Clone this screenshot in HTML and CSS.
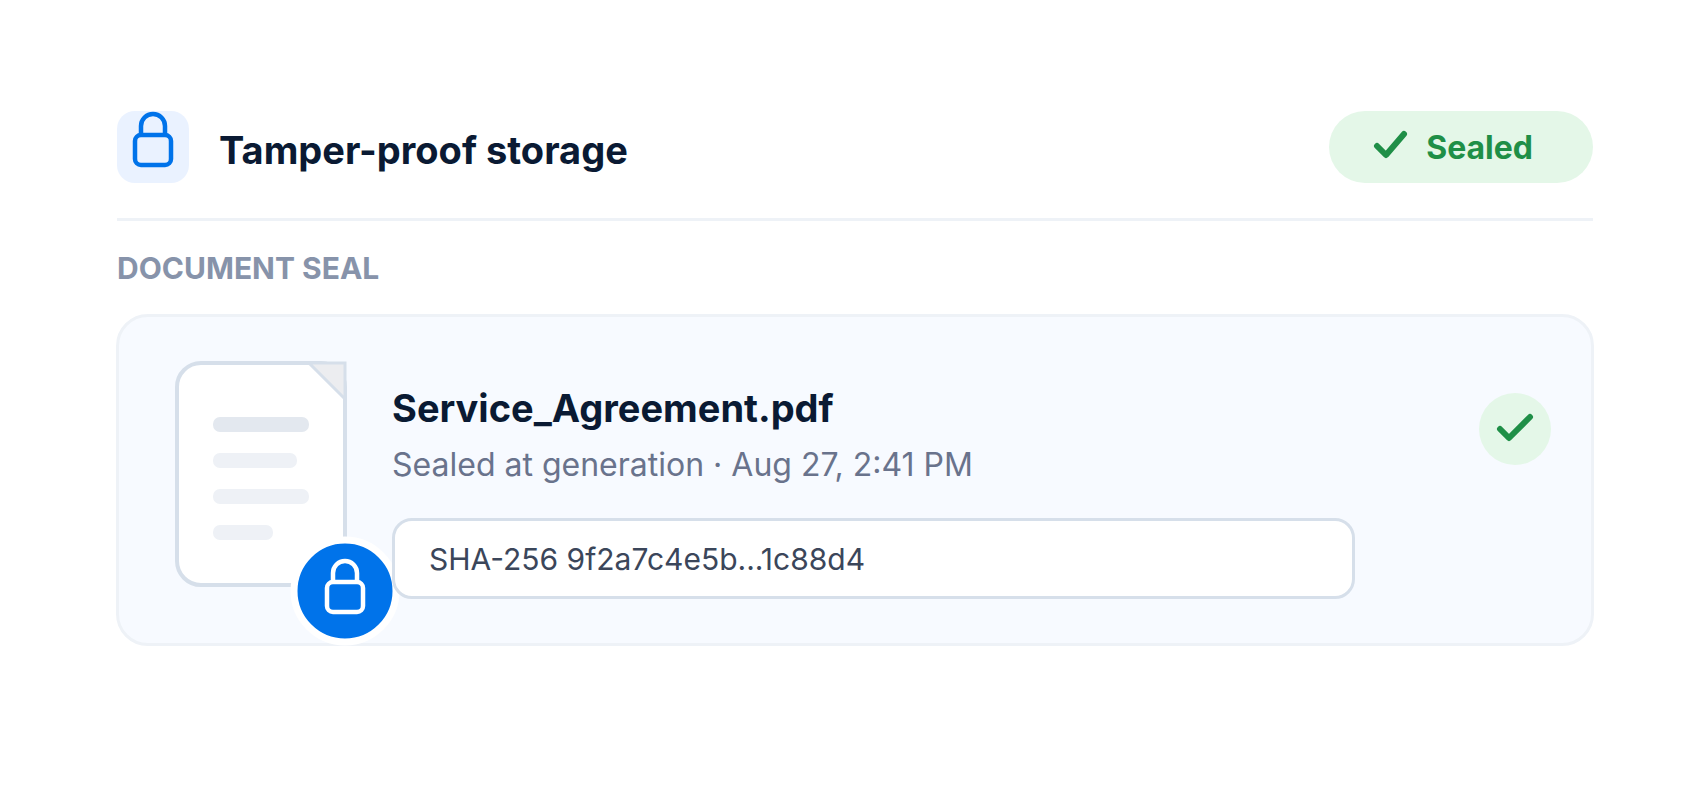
FILE: index.html
```
<!DOCTYPE html>
<html lang="en">
<head>
<meta charset="utf-8">
<title>Tamper-proof storage</title>
<link rel="stylesheet" href="styles.css">
</head>
<body>
<main class="panel">
<header class="panel-header">
<span class="lock-tile">
<svg width="72" height="72" viewBox="0 0 72 72" fill="none" stroke="#0073ea" stroke-width="4.5" aria-hidden="true">
<rect x="18" y="24" width="36" height="30" rx="6"/>
<path d="M24 24v-9a12 12 0 0 1 24 0v9"/>
</svg>
</span>
<h1>Tamper-proof storage</h1>
<span class="status">
<svg width="36" height="36" viewBox="0 0 36 36" fill="none" stroke="#1f8f47" stroke-width="6" stroke-linecap="round" stroke-linejoin="round" aria-hidden="true">
<path d="M5 17l9 9 18-21"/>
</svg>
Sealed
</span>
</header>

<section>
<h2>DOCUMENT SEAL</h2>
<div class="card">
<div class="document">
<svg width="172" height="226" viewBox="0 0 172 226" aria-hidden="true">
<rect x="2" y="2" width="168" height="222" rx="24" fill="#fff" stroke="#d6dfea" stroke-width="4"/>
<path d="M134 2h36v36z" fill="#ecedf0" stroke="#d6dfea" stroke-width="3"/>
<rect x="38" y="56" width="96" height="15" rx="7" fill="#e3e8ef"/>
<rect x="38" y="92" width="84" height="15" rx="7" fill="#eef1f6"/>
<rect x="38" y="128" width="96" height="15" rx="7" fill="#eef1f6"/>
<rect x="38" y="164" width="60" height="15" rx="7" fill="#eef1f6"/>
</svg>
<!-- lock badge on the corner of the page -->
<svg class="badge" width="110" height="110" viewBox="0 0 110 110" fill="none" stroke="#fff" stroke-width="4.5" aria-hidden="true">
<circle cx="55" cy="55" r="51" fill="#0073ea" stroke-width="7"/>
<rect x="37" y="46" width="36" height="30" rx="6"/>
<path d="M43 46v-9a12 12 0 0 1 24 0v9"/>
</svg>
</div>
<div class="info">
<h3>Service_Agreement.pdf</h3>
<p>Sealed at generation · Aug 27, 2:41 PM</p>
<input class="hash" type="text" aria-label="Document hash" value="SHA-256 9f2a7c4e5b...1c88d4" readonly>
</div>
<span class="verified">
<svg width="72" height="72" viewBox="0 0 72 72" fill="none" stroke="#1f8f47" stroke-width="6" stroke-linecap="round" stroke-linejoin="round" aria-hidden="true">
<path d="M21 36l9 9 21-21"/>
</svg>
</span>
</div>
</section>
</main>
</body>
</html>
```
FILE: styles.css
```
* {
    box-sizing: border-box;
}
body {
    margin: 0;
    background: #fff;
    color: #0a1a33;
    font-family: Inter, "Liberation Sans", sans-serif;
}
h1, h2, h3, p {
    margin: 0;
}
svg {
    display: block;
}
.panel {
    padding: 111px 114px 60px 117px;
}
.panel-header {
    display: flex;
    align-items: center;
    padding-bottom: 35px;
    border-bottom: 3px solid #eef2f7;
}
.lock-tile {
    border-radius: 18px;
    background: #eaf2ff;
}
h1 {
    padding-top: 6px;
    margin-left: 30px;
    font-size: 38px;
    line-height: 44px;
    font-weight: 700;
}
.status {
    display: flex;
    align-items: center;
    gap: 18px;
    height: 72px;
    margin-left: auto;
    padding: 0 60px 0 43px;
    border-radius: 36px;
    background: #e4f7e8;
    color: #1f8f47;
    font-size: 32px;
    font-weight: 700;
}
h2 {
    margin: 29px 0 28px;
    color: #8793aa;
    font-size: 30px;
    line-height: 36px;
    font-weight: 700;
}
.card {
    display: flex;
    align-items: flex-start;
    margin: 0 -1px;
    padding: 44px 40px 44px 56px;
    border: 3px solid #eef2f7;
    border-radius: 32px;
    background: #f7faff;
}
.document {
    position: relative;
    margin-right: 45px;
}
.badge {
    position: absolute;
    right: -53px;
    bottom: -59px;
}
.info {
    position: relative;
    flex: 1;
    padding-top: 25px;
}
h3 {
    font-size: 38px;
    line-height: 44px;
    font-weight: 700;
}
.info p {
    margin: 15px 0 33px;
    color: #69738c;
    font-size: 32px;
    line-height: 40px;
}
.hash {
    display: block;
    width: 100%;
    height: 81px;
    padding: 0 34px;
    border: 3px solid #d6dfea;
    border-radius: 20px;
    background: #fff;
    color: #3b465a;
    font: 30px Inter, "Liberation Sans", sans-serif;
}
.verified {
    margin: 32px 0 0 124px;
    border-radius: 50%;
    background: #e4f7e8;
}
```
